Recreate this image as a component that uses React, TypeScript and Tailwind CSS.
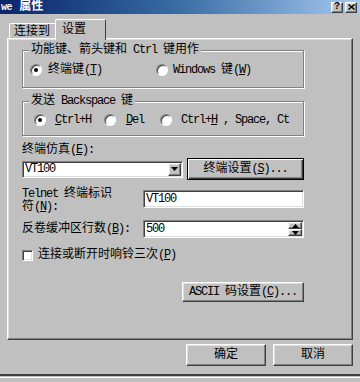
import React from 'react';

const raised =
  'border border-t-white border-l-white border-r-[#404040] border-b-[#404040] shadow-[inset_-1px_-1px_0_#808080,inset_1px_1px_0_#dfdfdf] bg-[#c0c0c0]';
const sunken =
  'border border-t-[#808080] border-l-[#808080] border-r-white border-b-white shadow-[inset_1px_1px_0_#404040,inset_-1px_-1px_0_#dfdfdf] bg-white';

// latin runs: narrow them to a 6px advance like the bitmap font
function Ascii({ s }: { s: string }) {
  const bits = s.split(/&(.)/);
  return (
    <span className="tracking-[-1.2px]">
      {bits.map((b, i) => (i % 2 ? <u key={i}>{b}</u> : b))}
    </span>
  );
}

function T({ s }: { s: string }) {
  const parts = s.split(/([\x20-\x7e]+)/).filter(Boolean);
  return (
    <span className="whitespace-pre">
      {parts.map((p, i) =>
        /[\x20-\x7e]/.test(p[0]) ? <Ascii key={i} s={p} /> : <span key={i}>{p}</span>
      )}
    </span>
  );
}

function Radio({ on }: { on?: boolean }) {
  return (
    <span className="flex h-[12px] w-[12px] shrink-0 items-center justify-center rounded-full border border-t-[#808080] border-l-[#808080] border-r-white border-b-white bg-white shadow-[inset_1px_1px_0_#404040]">
      {on && <span className="h-[4px] w-[4px] rounded-full bg-black" />}
    </span>
  );
}

function Group({ title, className, children }: { title: string; className: string; children: React.ReactNode }) {
  return (
    <div className={`relative border border-[#808080] shadow-[inset_1px_1px_0_#fff,1px_1px_0_#fff] ${className}`}>
      <span className="absolute left-[6px] top-[-8px] bg-[#c0c0c0] px-[2px] leading-[14px] whitespace-nowrap">
        <T s={title} />
      </span>
      {children}
    </div>
  );
}

function Arrow({ up }: { up?: boolean }) {
  return (
    <svg width="7" height="4" viewBox="0 0 7 4">
      <polygon points={up ? '3.5,0 7,4 0,4' : '0,0 7,0 3.5,4'} fill="#000" />
    </svg>
  );
}

export default function App() {
  return (
    <div className="flex h-[382px] w-[360px] flex-col overflow-hidden bg-[#c0c0c0] font-['Liberation_Mono','Noto_Sans_CJK_SC',monospace] text-[12px] leading-[14px] text-black">
      {/* title bar */}
      <div className="flex h-[14px] shrink-0 items-center justify-between bg-gradient-to-r from-[#0a246a] via-[#3a6ea5] to-[#a6caf0] pl-[1px] pr-[3px]">
        <span className="font-bold text-white">
          <span className="text-[10px] tracking-[-0.5px]">we</span> 属性
        </span>
        <div className="flex gap-[2px]">
          <span className={`flex h-[11px] w-[12px] items-center justify-center text-[10px] font-bold leading-none ${raised}`}>?</span>
          <span className={`flex h-[11px] w-[12px] items-center justify-center ${raised}`}>
            <svg width="7" height="6" viewBox="0 0 7 6">
              <path d="M0.5 0.5 L6.5 5.5 M6.5 0.5 L0.5 5.5" stroke="#000" strokeWidth="1.4" />
            </svg>
          </span>
        </div>
      </div>

      {/* tabs */}
      <div className="relative z-10 mt-[5px] ml-[7px] flex h-[21px] items-end pl-[2px]">
        <div className="mb-[2px] h-[15px] w-[46px] rounded-tl-[2px] border-t border-l border-white pl-[4px] pt-[1px]">
          <T s="连接到" />
        </div>
        <div className="h-[21px] w-[51px] rounded-t-[2px] border-t border-l border-r border-t-white border-l-white border-r-[#404040] bg-[#c0c0c0] pl-[6px] pt-[3px]">
          <T s="设置" />
        </div>
      </div>

      {/* panel */}
      <div className="-mt-[2px] ml-[7px] h-[302px] w-[346px] shrink-0 border border-t-white border-l-white border-r-[#404040] border-b-[#404040] pl-[14px] shadow-[inset_-1px_-1px_0_#808080,inset_1px_1px_0_#dfdfdf]">
        <div className="flex w-[282px] flex-col">
          <Group title="功能键、箭头键和 Ctrl 键用作" className="mt-[11px] h-[38px]">
            <div className="flex h-full items-center pl-[7px] pt-[2px]">
              <div className="flex w-[126px] items-center gap-[6px]">
                <Radio on />
                <T s="终端键(&T)" />
              </div>
              <div className="flex items-center gap-[5px]">
                <Radio />
                <T s="Windows 键(&W)" />
              </div>
            </div>
          </Group>

          <Group title="发送 Backspace 键" className="mt-[13px] h-[35px]">
            <div className="flex h-full items-center overflow-hidden whitespace-nowrap pl-[11px] pt-[3px]">
              <div className="flex w-[70px] shrink-0 items-center gap-[9px]">
                <Radio on />
                <T s="&Ctrl+H" />
              </div>
              <div className="flex w-[56px] shrink-0 items-center gap-[10px]">
                <Radio />
                <T s="&Del" />
              </div>
              <div className="flex shrink-0 items-center gap-[9px]">
                <Radio />
                <T s="Ctrl+&H , Space, Ct" />
              </div>
            </div>
          </Group>

          <div className="mt-[7px]">
            <T s="终端仿真(&E):" />
          </div>

          <div className="mt-[1px] flex h-[22px] items-center">
            <div className={`flex h-[17px] w-[161px] p-[1px] ${sunken}`}>
              <span className="flex-1 pl-[1px] leading-[13px]">
                <T s="VT100" />
              </span>
              <span className={`flex h-full w-[13px] items-center justify-center ${raised}`}>
                <Arrow />
              </span>
            </div>
            <div className="ml-[4px] flex h-[22px] w-[117px] items-center justify-center border border-black bg-[#c0c0c0] shadow-[inset_1px_1px_0_#fff,inset_-1px_-1px_0_#404040,inset_-2px_-2px_0_#808080]">
              <T s="终端设置(&S)..." />
            </div>
          </div>

          <div className="mt-[8px] flex items-start">
            <div className="w-[121px] leading-[13px]">
              <T s="Telnet 终端标识" />
              <br />
              <T s="符(&N):" />
            </div>
            <div className={`mt-[2px] flex h-[18px] w-[161px] items-center pl-[2px] ${sunken}`}>
              <T s="VT100" />
            </div>
          </div>

          <div className="mt-[6px] flex h-[18px] items-center">
            <div className="w-[121px]">
              <T s="反卷缓冲区行数(&B):" />
            </div>
            <div className={`flex h-[18px] w-[161px] items-center p-[1px] ${sunken}`}>
              <span className="flex-1 pl-[1px]">
                <T s="500" />
              </span>
              <div className="flex h-full w-[14px] flex-col">
                <span className={`flex h-1/2 items-center justify-center ${raised}`}>
                  <Arrow up />
                </span>
                <span className={`flex h-1/2 items-center justify-center ${raised}`}>
                  <Arrow />
                </span>
              </div>
            </div>
          </div>

          <div className="mt-[10px] flex h-[14px] items-center gap-[5px]">
            <span className={`h-[11px] w-[11px] ${sunken}`} />
            <T s="连接或断开时响铃三次(&P)" />
          </div>

          <div className={`mt-[20px] ml-auto flex h-[20px] w-[122px] items-center justify-center ${raised}`}>
            <T s="ASCII 码设置(&C)..." />
          </div>
        </div>
      </div>

      {/* dialog buttons */}
      <div className="mt-[4px] flex justify-end gap-[7px] pr-[7px]">
        <div className={`flex h-[22px] w-[80px] items-center justify-center ${raised}`}>
          <T s="确定" />
        </div>
        <div className={`flex h-[22px] w-[80px] items-center justify-center ${raised}`}>
          <T s="取消" />
        </div>
      </div>

      <div className="mt-[8px] h-[2px] bg-[#404040]" />
      <div className="mt-[1px] h-[1px] bg-white" />
    </div>
  );
}
